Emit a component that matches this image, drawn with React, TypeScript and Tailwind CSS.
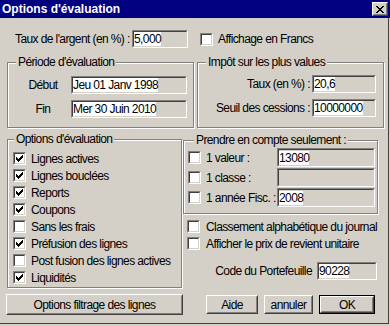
import React from "react";

const sunkenOuter =
  "border border-t-[#808080] border-l-[#808080] border-b-white border-r-white";
const sunkenInner =
  "border border-t-[#404040] border-l-[#404040] border-b-[#d4d0c8] border-r-[#d4d0c8]";

function CheckMark() {
  // classic 7x7 pixel check
  const px: [number, number, number][] = [
    [6, 0, 1],
    [5, 1, 2],
    [0, 2, 1],
    [4, 2, 3],
    [0, 3, 2],
    [3, 3, 3],
    [0, 4, 5],
    [1, 5, 3],
    [2, 6, 1],
  ];
  return (
    <svg width="7" height="7" viewBox="0 0 7 7" shapeRendering="crispEdges">
      {px.map(([x, y, w], i) => (
        <rect key={i} x={x} y={y} width={w} height={1} fill="#000" />
      ))}
    </svg>
  );
}

function Check({ checked }: { checked?: boolean }) {
  return (
    <span className={"flex w-[13px] h-[13px] shrink-0 " + sunkenOuter}>
      <span className={"flex flex-1 items-center justify-center bg-white " + sunkenInner}>
        {checked && <CheckMark />}
      </span>
    </span>
  );
}

function Field({ value, className }: { value?: string; className: string }) {
  return (
    <div className={"flex shrink-0 " + sunkenOuter + " " + className}>
      <div className={"flex flex-1 items-center overflow-hidden " + sunkenInner}>
        {value && <span className="bg-white leading-[14px] whitespace-nowrap">{value}</span>}
      </div>
    </div>
  );
}

function Button({
  label,
  className,
  isDefault,
}: {
  label: string;
  className: string;
  isDefault?: boolean;
}) {
  const btn = (
    <div className="flex h-full border border-t-white border-l-white border-b-[#404040] border-r-[#404040]">
      <div className="flex flex-1 items-center justify-center border border-t-[#d4d0c8] border-l-[#d4d0c8] border-b-[#808080] border-r-[#808080]">
        {label}
      </div>
    </div>
  );
  if (isDefault) {
    return <div className={"border border-black " + className}>{btn}</div>;
  }
  return <div className={className}>{btn}</div>;
}

function Group({
  title,
  className,
  titleClass,
  children,
}: {
  title: string;
  className: string;
  titleClass: string;
  children: React.ReactNode;
}) {
  return (
    <div
      className={
        "relative border border-[#808080] shadow-[inset_1px_1px_0_#fff,1px_1px_0_#fff] " + className
      }
    >
      <span className={"absolute top-[-8px] bg-[#d4d0c8] px-[2px] leading-[14px] whitespace-nowrap " + titleClass}>
        {title}
      </span>
      {children}
    </div>
  );
}

function CheckRow({ label, checked }: { label: string; checked?: boolean }) {
  return (
    <div className="flex h-[17px] items-center gap-[5px]">
      <Check checked={checked} />
      <span className="whitespace-nowrap">{label}</span>
    </div>
  );
}

export default function App() {
  const options: [string, boolean][] = [
    ["Lignes actives", true],
    ["Lignes bouclées", true],
    ["Reports", true],
    ["Coupons", true],
    ["Sans les frais", false],
    ["Préfusion des lignes", true],
    ["Post fusion des lignes actives", false],
    ["Liquidités", true],
  ];

  return (
    <div className="w-[390px] h-[326px] overflow-hidden bg-[#d4d0c8] text-black text-[12px] tracking-[-0.6px] font-['Liberation_Sans',Arial,sans-serif]">
      <div className="flex h-[324px] w-[389px] flex-col border-r border-b border-r-[#404040] border-b-[#404040]">
        {/* title bar */}
        <div className="flex h-[18px] w-[390px] shrink-0 items-center justify-between bg-[#000080] pl-[2px] pr-[2px]">
          <span className="text-[12px] font-bold leading-none tracking-normal text-white">
            Options d'évaluation
          </span>
          <div className="flex h-[14px] w-[16px] border border-t-white border-l-white border-b-[#404040] border-r-[#404040]">
            <div className="flex flex-1 items-center justify-center bg-[#d4d0c8] border border-t-[#d4d0c8] border-l-[#d4d0c8] border-b-[#808080] border-r-[#808080]">
              <svg width="8" height="7" viewBox="0 0 8 7" shapeRendering="crispEdges">
                <path d="M0 0h2v1h1v1h2V1h1V0h2v1H7v1H6v1H5v1h1v1h1v1h1v1H6V6H5V5H3v1H2v1H0V6h1V5h1V4h1V3H2V2H1V1H0z" fill="#000" />
              </svg>
            </div>
          </div>
        </div>

        <div className="flex flex-col pl-[6px]">
          {/* first row */}
          <div className="mt-[12px] flex h-[18px] items-center">
            <span className="w-[126px] shrink-0 pl-[9px] whitespace-nowrap">Taux de l'argent (en %) :</span>
            <Field value="5,000" className="h-[18px] w-[56px]" />
            <div className="ml-[12px] flex items-center gap-[5px]">
              <Check />
              <span>Affichage en Francs</span>
            </div>
          </div>

          {/* periode / impot */}
          <div className="mt-[14px] flex">
            <Group title="Période d'évaluation" titleClass="left-[8px]" className="ml-px h-[66px] w-[187px]">
              <div className="flex flex-col gap-[6px] pt-[13px]">
                <div className="flex items-center">
                  <span className="ml-[12px] w-[46px] text-center">Début</span>
                  <Field value="Jeu 01 Janv 1998" className="ml-[5px] h-[18px] w-[116px]" />
                </div>
                <div className="flex items-center">
                  <span className="ml-[12px] w-[46px] text-center">Fin</span>
                  <Field value="Mer 30 Juin 2010" className="ml-[5px] h-[18px] w-[116px]" />
                </div>
              </div>
            </Group>
            <Group title="Impôt sur les plus values" titleClass="left-[8px]" className="ml-[3px] h-[66px] w-[187px]">
              <div className="flex flex-col gap-[6px] pt-[12px]">
                <div className="flex items-center">
                  <span className="w-[112px] text-right">Taux (en %) :</span>
                  <Field value="20,6" className="ml-[2px] h-[18px] w-[64px]" />
                </div>
                <div className="flex items-center">
                  <span className="w-[112px] text-right">Seuil des cessions :</span>
                  <Field value="10000000" className="ml-[2px] h-[18px] w-[64px]" />
                </div>
              </div>
            </Group>
          </div>

          <div className="flex">
            {/* left column */}
            <div className="flex w-[177px] flex-col">
              <Group title="Options d'évaluation" titleClass="left-[6px]" className="ml-px mt-[11px] h-[149px] w-[175px]">
                <div className="flex flex-col pl-[5px] pt-[10px]">
                  {options.map(([label, checked]) => (
                    <CheckRow key={label} label={label} checked={checked} />
                  ))}
                </div>
              </Group>
              <Button label="Options filtrage des lignes" className="mt-[6px] h-[21px] w-[177px]" />
            </div>

            {/* right column */}
            <div className="flex w-[195px] flex-col">
              <Group title="Prendre en compte seulement :" titleClass="left-[10px]" className="mt-[12px] h-[74px] w-[195px]">
                <div className="flex pl-[4px] pt-[7px]">
                  <div className="flex w-[89px] flex-col gap-px">
                    {["1 valeur :", "1 classe :", "1 année Fisc. :"].map((l) => (
                      <div key={l} className="flex h-[19px] items-center gap-[5px]">
                        <Check />
                        <span className="whitespace-nowrap">{l}</span>
                      </div>
                    ))}
                  </div>
                  <div className="flex flex-col gap-px">
                    <Field value="13080" className="h-[19px] w-[98px]" />
                    <Field className="h-[19px] w-[98px]" />
                    <Field value="2008" className="h-[19px] w-[98px]" />
                  </div>
                </div>
              </Group>
              <div className="ml-[4px] mt-[4px] flex flex-col">
                <div className="flex h-[17px] items-center gap-[6px]">
                  <Check />
                  <span className="whitespace-nowrap">Classement alphabétique du journal</span>
                </div>
                <div className="flex h-[17px] items-center gap-[6px]">
                  <Check />
                  <span className="whitespace-nowrap">Afficher le prix de revient unitaire</span>
                </div>
              </div>
              <div className="mt-[10px] flex items-center justify-end pr-px">
                <span>Code du Portefeuille</span>
                <Field value="90228" className="ml-[5px] h-[18px] w-[60px]" />
              </div>
              <div className="ml-[23px] mt-[15px] flex gap-[6px]">
                <Button label="Aide" className="h-[19px] w-[52px]" />
                <Button label="annuler" className="h-[19px] w-[49px]" />
                <Button label="OK" isDefault className="h-[19px] w-[56px]" />
              </div>
            </div>
          </div>
        </div>
      </div>
    </div>
  );
}
